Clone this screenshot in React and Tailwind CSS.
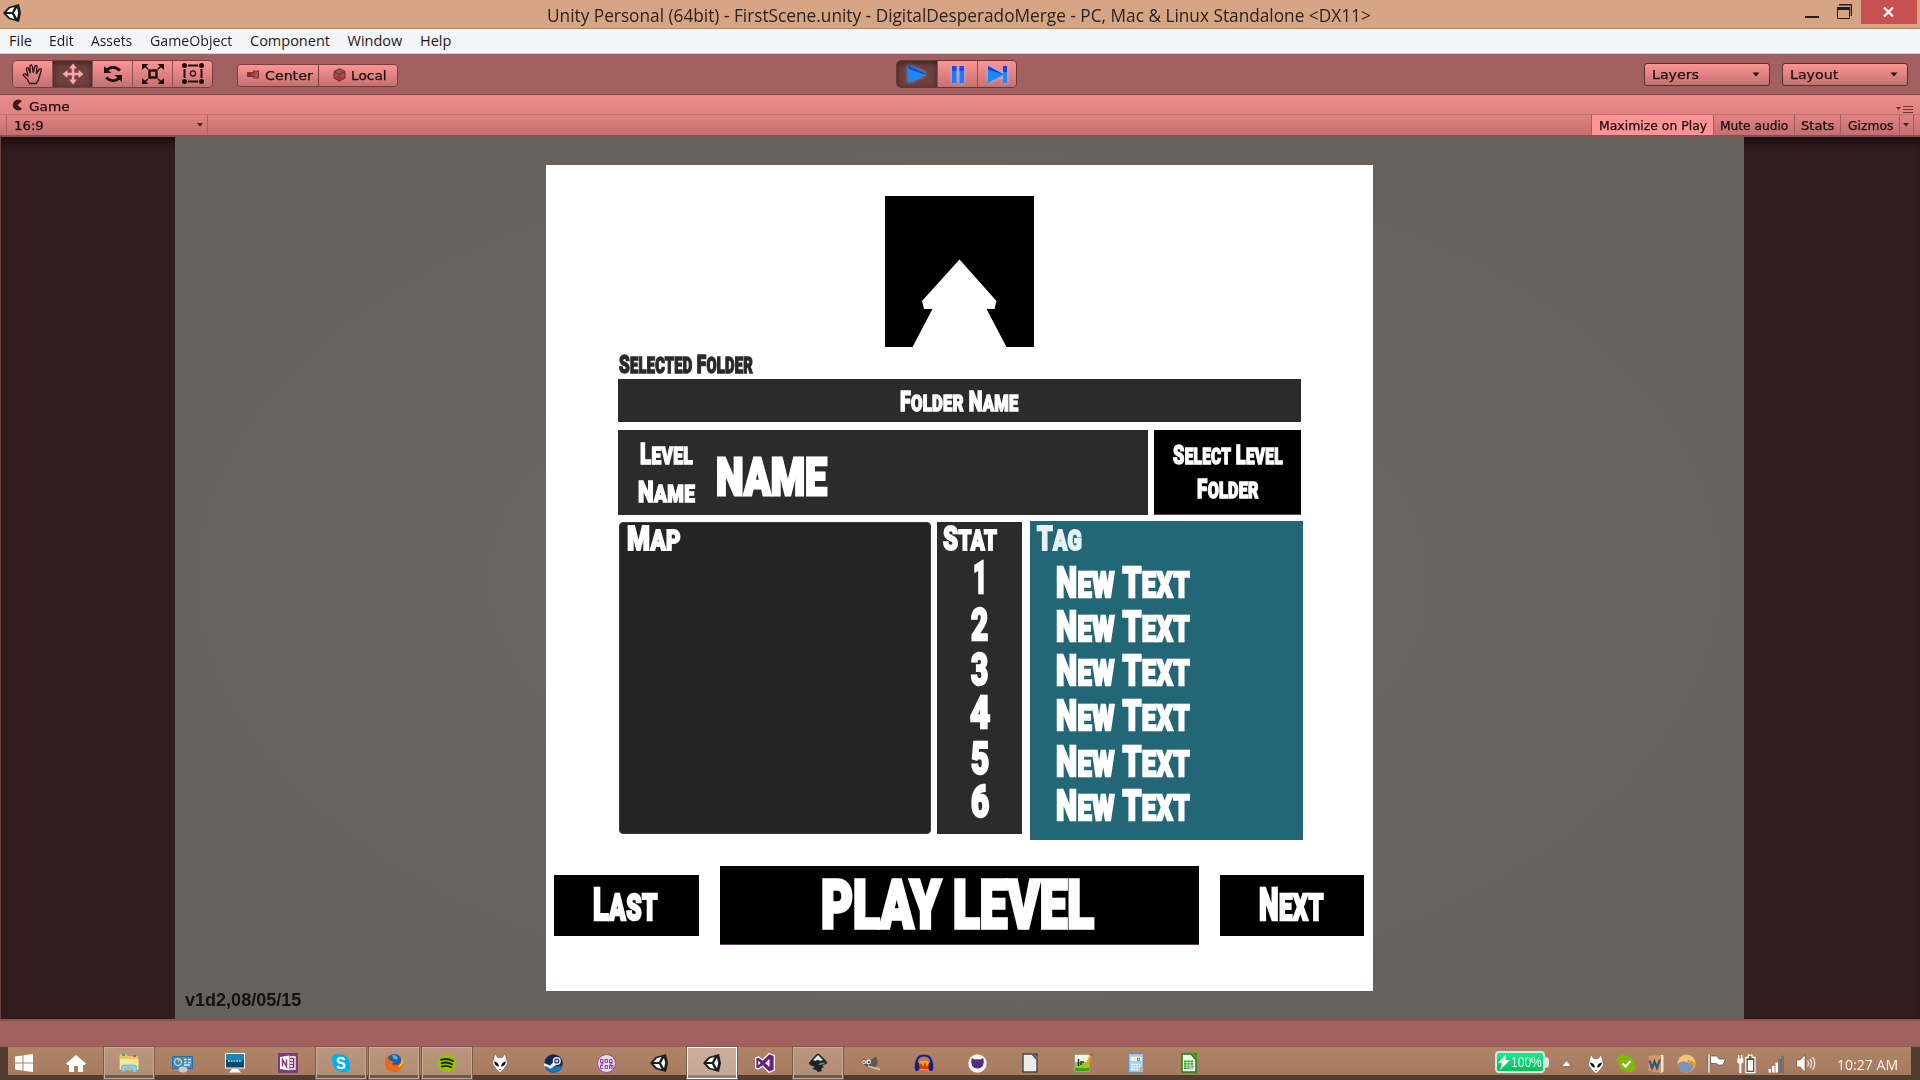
import { useLayoutEffect, useRef, useState } from "react";

/* Text squeezed or stretched horizontally to a given width. */
function Fit({ w, size, line, className = "", children }) {
  const ref = useRef(null);
  const [scale, setScale] = useState(1);
  useLayoutEffect(() => {
    if (ref.current.offsetWidth) setScale(w / ref.current.offsetWidth);
  }, [w, size]);
  return (
    <div className={"shrink-0 " + className} style={{ width: w, height: line, fontSize: size, lineHeight: line + "px" }}>
      <span ref={ref} className="inline-block origin-left whitespace-pre align-top" style={{ transform: `scaleX(${scale})` }}>
        {children}
      </span>
    </div>
  );
}

/* Poster lettering: heavy, condensed capitals with a larger first letter. */
function Deco({ w, cap, text, flat = false, className = "" }) {
  return (
    <Fit w={w} size={cap / 0.745} line={cap} className={"font-[Roboto,sans-serif] font-black [-webkit-text-stroke:0.055em_currentColor] " + className}>
      {flat
        ? text
        : text.split(" ").map((word, i) => (
            <span key={i}>
              {i > 0 && " "}
              <span className="inline-block text-[0.85em] leading-[0] tracking-[0.02em] uppercase first-letter:text-[1.176em]">{word}</span>
            </span>
          ))}
    </Fit>
  );
}

const Sys = (p) => <Fit {...p} className={"font-['Open_Sans','Noto_Sans',sans-serif] " + (p.className || "")} />;
const Uni = (p) => <Fit {...p} className={"font-['DejaVu_Sans',sans-serif] text-[#1c0e0e] [-webkit-text-stroke:0.25px_currentColor] " + (p.className || "")} />;

function Unity({ size = 20, className = "" }) {
  return (
    <svg width={size} height={size} viewBox="0 0 20 20" className={className}>
      <path d="M1 10 L6.5 4 L17 1 L19 10 L17 19 L6.5 16 Z" fill="#1d1d1d" />
      <path d="M4.5 9 L8 5.3 L12.5 4 L10 9Z M4.5 11 L8 14.7 L12.5 16 L10 11Z M12 10 L15 4.8 L16.2 10 L15 15.2Z" fill="#fff" />
    </svg>
  );
}

function Caret({ className = "" }) {
  return (
    <svg width="8" height="5" viewBox="0 0 8 5" className={className}>
      <path d="M0.5 0.5h7L4 4.5z" fill="#1c0e0e" />
    </svg>
  );
}

function Alien({ w = 16 }) {
  return (
    <svg width={w} height="20" viewBox="0 0 16 20">
      <path d="M3 .5 L5.5 4.5 H10.5 L13 .5 L14.5 6 L15.5 11 L12 16 L8 19.5 L4 16 L.5 11 L1.5 6Z" fill="#fff" stroke="#5b4b42" strokeWidth=".5" />
      <path d="M2 8.5 Q6.5 9 7 13.5 Q3 13.5 2 8.5Z M14 8.5 Q9.5 9 9 13.5 Q13 13.5 14 8.5Z M6.5 16h3l-1.5 1z" fill="#111" />
    </svg>
  );
}

function TitleBar() {
  return (
    <header className="flex h-[29px] shrink-0 border-b border-[#b98863] bg-[#d6a583]">
      <Unity size={20} className="mt-[3px] ml-[2px]" />
      <Sys w={824} size={17.5} line={31} className="ml-[525px] text-[#2b2320]">
        {"Unity Personal (64bit) - FirstScene.unity - DigitalDesperadoMerge - PC, Mac & Linux Standalone <DX11>"}
      </Sys>
      <div className="ml-auto flex">
        <div className="mt-4 mr-[18px] h-[2px] w-[14px] bg-[#222]" />
        <svg width="15" height="15" viewBox="0 0 15 15" className="mt-1 mr-[9px]">
          <path d="M2 .75H14.5V12" fill="none" stroke="#222" strokeWidth="1.5" />
          <path d="M.5 14.5V4H12.5V14.5Z" fill="none" stroke="#222" />
          <path d="M0 3h13v3H0z" fill="#222" />
        </svg>
        <div className="mr-[3px] flex h-6 w-14 items-center justify-center bg-[#c75050]">
          <svg width="11" height="10" viewBox="0 0 11 10" className="-ml-px">
            <path d="M1 .5 L10 9.5 M10 .5 L1 9.5" stroke="#fff" strokeWidth="2.2" />
          </svg>
        </div>
      </div>
    </header>
  );
}

const menus = [["File", 23, 17], ["Edit", 25, 17], ["Assets", 41, 18], ["GameObject", 82, 18], ["Component", 80, 17.5], ["Window", 55, 17.5], ["Help", 31, 0]];

function MenuBar() {
  return (
    <nav className="flex h-[25px] shrink-0 border-b border-[#d9cfd1] bg-[#f4f5f7] pl-[9px]">
      {menus.map(([t, w, gap]) => (
        <div key={t} className="shrink-0" style={{ marginRight: gap }}>
          <Sys w={w} size={14.5} line={24} className="text-[#1f1722]">{t}</Sys>
        </div>
      ))}
    </nav>
  );
}

const up = "bg-linear-to-b from-[#fd9494] to-[#c57171]";
const down = "bg-[#6f4141] shadow-[inset_0_2px_6px_#3c2020]";

function Tools() {
  const icons = [
    <svg key="h" width="22" height="22" viewBox="0 0 22 22" fill="none" stroke="#2a1414" strokeWidth="1.3" strokeLinejoin="round">
      <path d="M7 20 L5.5 16.5 L1.3 12.2 Q1.5 10.3 3.5 11 L6 13 L4.4 6 Q4.7 4 6.3 5 L8.2 10 L8 3 Q9 1 10.3 3 L11.2 9.5 L13 3 Q14.5 1.5 15 3.5 L14.3 10.5 L17.5 6 Q19.5 5 19.3 7 L17.3 14 Q16.5 17.5 14.5 20" />
      <path d="M7 20.5h8" />
    </svg>,
    <svg key="m" width="22" height="22" viewBox="0 0 22 22" fill="#ffa5a5">
      <path d="M11 .5 L15 5.5H12.3V9.7H16.5V7L21.5 11L16.5 15V12.3H12.3V16.5H15L11 21.5L7 16.5H9.7V12.3H5.5V15L.5 11L5.5 7V9.7H9.7V5.5H7Z" />
    </svg>,
    <svg key="r" width="20" height="18" viewBox="0 0 20 18" fill="none" stroke="#1c0e0e" strokeWidth="3">
      <path d="M3 5.500 Q10 -1 17 5.500 M17 12.500 Q10 19 3 12.500" />
      <path d="M1 1v7h7.500z M19 17v-7h-7.500z" fill="#1c0e0e" stroke="none" />
    </svg>,
    <svg key="s" width="22" height="20" viewBox="0 0 22 20" fill="none" stroke="#1c0e0e">
      <path d="M7.500 6.500h7v7h-7z" strokeWidth="2.4" />
      <path d="M6 5 L1.500 1 M16 5 L20.500 1 M6 15 L1.500 19 M16 15 L20.500 19" strokeWidth="1.600" />
      <path d="M0 0h6.500L0 6zM22 0v6L15.500 0zM0 20v-6L6.500 20zM22 20h-6.500L22 14z" fill="#1c0e0e" stroke="none" />
    </svg>,
    <svg key="t" width="22" height="21" viewBox="0 0 22 21" fill="none" stroke="#1c0e0e">
      <path d="M6 2.500h10M6 18.500h10M2.500 6v9M19.500 6v9" strokeWidth="2" />
      <circle cx="11" cy="10.500" r="2.600" strokeWidth="1.200" />
      <g fill="#1c0e0e" stroke="none">
        <circle cx="2.500" cy="2.500" r="2.500" /><circle cx="19.500" cy="2.500" r="2.500" />
        <circle cx="2.500" cy="18.500" r="2.500" /><circle cx="19.500" cy="18.500" r="2.500" />
      </g>
    </svg>,
  ];
  return (
    <div className="mt-[6px] ml-[12px] flex h-[28px] w-[201px] divide-x divide-[#8f5050] overflow-hidden rounded-[5px] border border-[#733f3f]">
      {icons.map((ic, i) => (
        <div key={i} className={"flex flex-1 items-center justify-center pb-px " + (i === 1 ? down : up)}>{ic}</div>
      ))}
    </div>
  );
}

function Toolbar() {
  return (
    <div className="flex h-[41px] shrink-0 border-b border-[#7d4848] bg-[#a26060]">
      <Tools />
      <div className="mt-[10px] ml-[24px] flex h-[23px] w-[161px] divide-x divide-[#733f3f] overflow-hidden rounded-[4px] border border-[#733f3f]">
        <div className={"flex w-[81px] items-center pl-[9px] " + up}>
          <svg width="12" height="9" viewBox="0 0 12 9" className="mr-[6px] -mt-[2px]">
            <path d="M0 2h6v5H0z" fill="#7b3636" /><path d="M6.500 1h5v7h-5z" fill="#a25858" stroke="#693434" /><path d="M4 3h4v3H4z" fill="#c92c38" />
          </svg>
          <Uni w={48} size={13} line={21}>Center</Uni>
        </div>
        <div className={"flex flex-1 items-center pl-[14px] " + up}>
          <svg width="13" height="14" viewBox="0 0 13 14" className="mr-[5px] -mt-[2px]">
            <path d="M6.500 .7 L12 3.500V10L6.500 13.300L1 10V3.500Z" fill="#955" stroke="#5e3030" />
            <path d="M1 3.500L6.500 6.500L12 3.500M6.500 6.500V13" stroke="#5e3030" fill="none" />
            <path d="M2 9.500l4.500-2 4.500 2-4.500 3.500z" fill="#c62b38" />
          </svg>
          <Uni w={36} size={13} line={21}>Local</Uni>
        </div>
      </div>
      <div className="mt-[6px] ml-[498px] flex h-[28px] w-[121px] divide-x divide-[#8f5050] overflow-hidden rounded-[5px] border border-[#653838]">
        <div className={"flex w-[41px] items-center justify-center " + down}>
          <svg width="19" height="18" viewBox="0 0 19 18" className="drop-shadow-[0_0_2px_#69b8ff]"><path d="M.5 .5L18.500 9L.5 17.500z" fill="#148cff" /><path d="M.5 .5L18.500 9L15 9L.5 4z" fill="#1048e8" /></svg>
        </div>
        <div className={"flex w-[40px] items-center justify-center " + up}>
          <svg width="12" height="17" viewBox="0 0 12 17" className="drop-shadow-[0_0_2px_#a8b8ff]"><path d="M0 0h4.500v17H0zM7.500 0h4.500v17H7.500z" fill="#167cf8" /><path d="M0 0h4.500v5H0zM7.500 0h4.500v5H7.500z" fill="#0d4df0" /></svg>
        </div>
        <div className={"flex flex-1 items-center justify-center " + up}>
          <svg width="19" height="17" viewBox="0 0 19 17" className="drop-shadow-[0_0_2px_#a8b8ff]"><path d="M0 0L15 8V0h4v17h-4V9L0 17z" fill="#168af8" /><path d="M0 0L15 8V0h4v6h-4v2.500L0 3.500z" fill="#0d45d8" /></svg>
        </div>
      </div>
      <div className="mt-[9px] mr-[12px] ml-auto flex gap-[12px]">
        {[["Layers", 47], ["Layout", 48]].map(([t, w]) => (
          <div key={t} className={"flex h-[23px] w-[126px] items-center justify-between rounded-[3px] border border-[#593030] pr-[9px] pl-[7px] " + up}>
            <Uni w={w} size={13} line={21}>{t}</Uni>
            <Caret />
          </div>
        ))}
      </div>
    </div>
  );
}

const toggles = [["Maximize on Play", 108, 121, true], ["Mute audio", 68, 80, false], ["Stats", 33, 45, false], ["Gizmos", 45, 58, false]];

function GameTab() {
  return (
    <div className="shrink-0">
      <div className="flex h-[20px] items-start border-b border-[#c07272] bg-linear-to-b from-[#ec8c8c] to-[#e08282] pl-[12px]">
        <svg width="11" height="12" viewBox="0 0 11 12" className="mt-[4px]">
          <path d="M10 2 A5.500 5.500 0 1 0 10 10 L5.500 6Z" fill="#3a1b1b" />
        </svg>
        <Uni w={41} size={13} line={23} className="ml-[6px]">Game</Uni>
        <div className="mt-[10px] mr-[7px] ml-auto flex items-start">
          <svg width="17" height="9" viewBox="0 0 17 9"><path d="M0 2h5L2.500 5z" fill="#5d3030" /><path d="M7 1.500h10M7 4.500h10M7 7.500h10" stroke="#6a3838" /></svg>
        </div>
      </div>
      <div className="flex h-[22px] border-b-2 border-[#8a4e4e] bg-linear-to-b from-[#e08383] to-[#c66f6f]">
        <div className="ml-[6px] flex w-[202px] items-start justify-between border-x border-[#b06464] pr-[4px] pl-[7px]">
          <Uni w={30} size={11.500} line={22}>16:9</Uni>
          <svg width="6" height="4" viewBox="0 0 6 4" className="mt-[8px]"><path d="M0 0h6L3 3.500z" fill="#4a2020" /></svg>
        </div>
        <div className="mr-[6px] ml-auto flex border-x border-[#a55c5c]">
          {toggles.map(([t, w, box, on]) => (
            <div key={t} className={"flex justify-center border-r border-[#a55c5c] " + (on ? "bg-[#ff9494]" : "")} style={{ width: box + 1 }}>
              <Uni w={w} size={11.500} line={22}>{t}</Uni>
            </div>
          ))}
          <div className="flex w-[13px] justify-center pt-[8px] pr-[2px]">
            <svg width="6" height="4" viewBox="0 0 6 4"><path d="M0 0h6L3 3.500z" fill="#4a2020" /></svg>
          </div>
        </div>
      </div>
    </div>
  );
}

const statRows = [["1", 14, 562], ["2", 17, 608.5], ["3", 17, 653.5], ["4", 20, 696.5], ["5", 18, 743], ["6", 18, 786]];
const tagTops = [566, 610, 654.5, 699.5, 745.5, 789.5];

function LevelPanel() {
  return (
    <div className="flex h-[826px] w-[827px] flex-col bg-white text-white">
      <svg width="149" height="151" viewBox="0 0 149 151" className="mt-[31px] ml-[339px] shrink-0">
        <path d="M0 0H149V151H121.500L101.500 113H109.500L111.500 105L74.500 63.500L37 105L39 113H47.500L27.500 151H0Z" fill="#000" />
      </svg>
      <Deco w={134} cap={19} text="Selected Folder" className="mt-[8px] ml-[73px] text-[#2b2b2b]" />
      <div className="mt-[5px] ml-[72px] flex h-[43px] w-[683px] shrink-0 items-center justify-center bg-[#2b2b2b] pt-[2px]">
        <Deco w={119} cap={20} text="Folder Name" />
      </div>
      <div className="mt-[8px] ml-[72px] flex h-[85px] w-[683px] shrink-0 gap-[6px]">
        <div className="flex w-[530px] bg-[#2b2b2b] pl-[20px]">
          <div className="flex w-[57px] flex-col items-center gap-[16px] pt-[14px]">
            <Deco w={53} cap={21.5} text="Level" />
            <Deco w={57} cap={21.5} text="Name" />
          </div>
          <Deco w={111} cap={39} text="NAME" flat className="mt-[28px] ml-[21px]" />
        </div>
        <div className="flex flex-1 flex-col items-center gap-[14px] border-b border-[#5d3c66] bg-black pt-[16px]">
          <Deco w={110} cap={19.5} text="Select Level" />
          <Deco w={62} cap={19.5} text="Folder" />
        </div>
      </div>
      <div className="mt-[6px] ml-[73px] flex h-[319px] shrink-0">
        <div className="mt-px h-[312px] w-[312px] rounded-[4px] border border-[#3a3a3a] bg-[#242424] pt-[3px] pl-[7px]">
          <Deco w={54} cap={25} text="Map" />
        </div>
        <div className="mt-px ml-[6px] flex h-[312px] w-[85px] flex-col bg-[#2b2b2b] pt-[4px]">
          <Deco w={54} cap={25} text="Stat" className="ml-[6px]" />
          {statRows.map(([d, w, y], i) => (
            <div key={d} className="flex shrink-0 justify-center" style={{ marginTop: i ? y - statRows[i - 1][2] - 32.5 : 12 }}>
              <Deco w={w} cap={32.5} text={d} flat />
            </div>
          ))}
        </div>
        <div className="ml-[8px] w-[273px] bg-[#236777] pt-[5px]">
          <Deco w={45} cap={25} text="Tag" className="ml-[7px] text-[#e6f2f3]" />
          {tagTops.map((y, i) => (
            <div key={y} className="pl-[26px]" style={{ marginTop: i ? y - tagTops[i - 1] - 31 : 15.5 }}>
              <Deco w={134} cap={31} text="New Text" />
            </div>
          ))}
        </div>
      </div>
      <div className="mt-[26px] ml-[8px] flex shrink-0 items-center gap-[21px]">
        <div className="flex h-[61px] w-[145px] items-center justify-center bg-black pr-[2px]"><Deco w={65} cap={33} text="Last" /></div>
        <div className="flex h-[79px] w-[479px] items-center justify-center border-b border-[#5d3c66] bg-black pt-[2px]"><Deco w={273} cap={49.5} text="PLAY LEVEL" flat className="-ml-[4px]" /></div>
        <div className="flex h-[61px] w-[144px] items-center justify-center bg-black pr-px"><Deco w={65} cap={33} text="Next" /></div>
      </div>
    </div>
  );
}

function GameView() {
  return (
    <main className="flex h-[882px] shrink-0 border-l border-[#6d3f3f] bg-[#301d1d] shadow-[inset_0_10px_10px_-4px_#1d1010]">
      <div className="ml-[174px] flex w-[1569px] bg-[radial-gradient(ellipse_at_center,#6c645e_40%,#68605a_75%)]">
        <div className="flex w-[371px] items-end pb-[8px] pl-[10px]">
          <Fit w={116} size={18.5} line={22} className="font-['Liberation_Sans',sans-serif] font-bold text-[#151210]">v1d2,08/05/15</Fit>
        </div>
        <div className="pt-[28px]"><LevelPanel /></div>
      </div>
    </main>
  );
}

const taskIcons = [
  [<svg key="i" width="18" height="18" viewBox="0 0 18 18" className="ml-[2px]"><path d="M0 2.500L7.500 1.400V8.500H0zM8.500 1.200L18 0V8.500H8.500zM0 9.500h7.500v7L0 15.500zM8.500 9.500H18V18L8.500 16.700z" fill="#fff" /></svg>],
  [<svg key="i" width="20" height="17" viewBox="0 0 20 17"><path d="M10 0L20 8.500L18.500 10H17V17H12V11H8V17H3V10H1.500L0 8.500z" fill="#fff" /></svg>],
  [<svg key="i" width="20" height="20" viewBox="0 0 20 20"><path d="M.5 3Q.5 1 2 1H7L9 3H18Q19 3 19 4V17H.5z" fill="#e6c765" /><path d="M3 .8h3v2H3z" fill="#3ba552" /><path d="M14 2h3v2h-3z" fill="#d05c38" /><path d="M1 6H19.500V16H1z" fill="#f8e69c" /><path d="M2.500 19V14Q2.500 12 5 12H15Q17.500 12 17.500 14V19H13.500V15.500H6.500V19z" fill="#8dcdec" stroke="#5ba8d2" strokeWidth=".6" /></svg>, "open"],
  [<svg key="i" width="21" height="19" viewBox="0 0 21 19"><path d="M.5 2.500h20v12H.5z" fill="#3c8ac8" stroke="#2a6ca5" /><circle cx="6" cy="8" r="3.500" fill="none" stroke="#d6ecfb" /><path d="M6 8V4A4 4 0 0 1 9.500 6z" fill="#ffb52c" /><path d="M12 5.500h2.500M16 5.500h3M12 8.500h2.500M16 8.500h3M12 11h6" stroke="#d6ecfb" strokeWidth="1.500" /><ellipse cx="11" cy="15.500" rx="4.500" ry="3" fill="#c8ccd1" /></svg>],
  [<svg key="i" width="20" height="20" viewBox="0 0 20 20"><path d="M0 0h20v15.500H0z" fill="#f5f8fb" /><path d="M1 1h18v13.500H1z" fill="#06476f" /><path d="M1 1h18v6H1z" fill="#1488b9" /><path d="M3 8h14" stroke="#b3dcec" strokeWidth="1.500" strokeDasharray="2 .7" /><path d="M7 16h6l3 3.500H4z" fill="#fff" /></svg>],
  [<div key="i" className="flex h-5 w-5 items-center justify-center bg-[#80397b]"><svg width="16" height="16" viewBox="0 0 16 16"><path d="M10 2h5v12h-5" fill="none" stroke="#fff" strokeWidth="1.300" /><path d="M10 5h3M10 8h3M10 11h3" stroke="#fff" strokeWidth="1.300" /><path d="M0 2L9.500 .5v15L0 14z" fill="#fff" /><path d="M2.500 11.500V4.500L6.500 11.500V4.500" fill="none" stroke="#80397b" strokeWidth="1.500" /></svg></div>],
  [<svg key="i" width="20" height="20" viewBox="0 0 20 20"><circle cx="10" cy="10" r="8.500" fill="#00aff0" /><circle cx="6" cy="6" r="5.300" fill="#00aff0" /><circle cx="14" cy="14" r="5.300" fill="#00aff0" /><path d="M13.300 7Q12.500 4.800 10 4.800Q6.800 4.800 6.800 7.300Q6.800 9.300 10 9.900Q13.500 10.500 13.500 12.700Q13.500 15.200 10 15.200Q7 15.200 6.500 12.800" fill="none" stroke="#fff" strokeWidth="2.200" /></svg>, "open"],
  [<svg key="i" width="20" height="20" viewBox="0 0 20 20"><circle cx="10" cy="10" r="9" fill="#e55b16" /><path d="M4 4Q8 0 14 2Q18 5 17 9Q15 12 11 12Q6 11 5 8z" fill="#1d5da8" /><path d="M8 2Q13 2 14 5Q12 8 9 5z" fill="#52b0e0" /><path d="M1.500 4Q0 11 3 15Q8 20.500 15 17.500Q19.500 14 18.500 7Q17 12 12 13.500Q8 13 8 10.500L10.500 9.500L6.500 7.500Q4 7 3.500 4.500z" fill="#ec6a1a" /><path d="M17.500 4Q18.500 10 14 14Q18 14 19 9Q19 6 17.500 4z" fill="#ffd23e" /></svg>, "open"],
  [<svg key="i" width="20" height="20" viewBox="0 0 20 20"><circle cx="10" cy="10" r="9.300" fill="#97c200" /><path d="M4 6.800Q10 4.800 16 8M4.500 10.300Q10 8.300 15 11.200M5 13.500Q10 12 14 14.300" fill="none" stroke="#1c2400" strokeWidth="1.900" strokeLinecap="round" /></svg>, "open"],
  [<Alien key="i" />],
  [<svg key="i" width="19" height="19" viewBox="0 0 19 19"><circle cx="9.500" cy="9.500" r="9.200" fill="#14284e" /><path d="M1 13Q5 19 10 18.700Q16 18 18.500 12z" fill="#1377b1" /><path d="M0 9L6 11.500L10 7.500L14 10L9 13Q6 16 4.500 13.500L0 12z" fill="#e8e8ee" /><circle cx="12.800" cy="7" r="3.300" fill="#14284e" stroke="#e8e8ee" strokeWidth="1.500" /><circle cx="12.800" cy="7" r="1.500" fill="#cdd4dd" /></svg>],
  [<svg key="i" width="19" height="19" viewBox="0 0 19 19"><circle cx="9.500" cy="9.500" r="9" fill="#e6dde8" stroke="#954fa5" /><path d="M6 8.500H3.500V5.500H6V10H3.500M8 5.500h2.500v3H8zM15 8.500H12.500V5.500H15V10H12.500M6 11.500H3.500v3H6M8 11.500h2.500v3H8zM12.500 15v-3.500h3.500V15M14.200 11.500V15" fill="none" stroke="#8c39a5" strokeWidth="1" /></svg>],
  [<Unity key="i" size={20} />],
  [<Unity key="i" size={20} />, "active"],
  [<svg key="i" width="20" height="20" viewBox="0 0 20 20"><path d="M14 .7L19.300 2.500V17L14 19.300L7.500 13L3.500 16L.7 15V5L3.500 4L7.500 7z" fill="#68217a" stroke="#fff" strokeWidth="1.300" /><path d="M14.500 6V14L10 10zM3.300 7.500V12.500L5.500 10z" fill="#fff" /></svg>],
  [<svg key="i" width="20" height="20" viewBox="0 0 20 20"><path d="M10 .5Q12 1 19 9Q20 11 16 11.500L14 13L16 14L13 16L14 18L10 19L8 17L4 16L7 14L2 12Q0 10 2 8.500Q8 1 10 .5z" fill="#1e2228" /><path d="M10 2L15 7L12 8L10 6.500L7.500 8L5 7z" fill="#dfe7ef" /><path d="M12 10L18 9.500Q15 12 10 12z" fill="#6f87a5" /></svg>, "open"],
  [<svg key="i" width="20" height="16" viewBox="0 0 20 16"><path d="M.5 5Q3 3 6 5Q11 6 15 1L16.500 6Q17 10 14 12Q8 14 4 10L1 8z" fill="#5e564b" /><circle cx="3" cy="7" r="1.900" fill="#f3f3f3" /><circle cx="7.500" cy="7" r="2.400" fill="#f3f3f3" /><circle cx="3" cy="7" r=".8" /><circle cx="7.800" cy="7.200" r="1" /><path d="M7 11L19 14.500" stroke="#d2c7b4" strokeWidth="1.500" /></svg>],
  [<svg key="i" width="20" height="18" viewBox="0 0 20 18"><path d="M5 7h10v9H5z" fill="#f5a416" /><path d="M5 12L7 9L9 13L11 8L13 13L15 10V15H5z" fill="#e52c14" /><path d="M2.500 11Q2 1.500 10 1.500Q18 1.500 17.500 11" fill="none" stroke="#171d8b" strokeWidth="2.200" /><rect x=".8" y="8" width="4.500" height="9" rx="2" fill="#171d8b" /><rect x="14.700" y="8" width="4.500" height="9" rx="2" fill="#171d8b" /></svg>],
  [<svg key="i" width="19" height="19" viewBox="0 0 19 19"><circle cx="9.500" cy="9.500" r="9.200" fill="#f7f5fa" /><path d="M3.800 4L6.500 5.500Q9.500 5 12.500 5.500L15.200 4Q16.500 8 15 11.500Q13 14.500 9.500 14.500Q6 14.500 4 11.500Q2.500 8 3.800 4z" fill="#4f2d7f" /></svg>],
  [<svg key="i" width="16" height="20" viewBox="0 0 16 20"><path d="M1 1H10L15 6.500V19H1z" fill="#ececec" stroke="#444" strokeWidth="1.400" /><path d="M11 0h5v5z" fill="#555" /></svg>],
  [<svg key="i" width="19" height="20" viewBox="0 0 19 20"><path d="M.5 1.500h15V19H.5z" fill="#f3f9ea" stroke="#8b9b75" strokeWidth=".8" /><path d="M1 9h14v9H1z" fill="#86cf1e" /><path d="M1 15h14v3.500H1z" fill="#37a613" /><path d="M4.500 6v7M7 8v4M9 8v2" stroke="#222" strokeWidth="1.400" /><path d="M17.500 1L11 15" stroke="#e2a72b" strokeWidth="2.400" /><path d="M17 0l2 1-1 2-2-1z" fill="#914b4b" /></svg>],
  [<svg key="i" width="16" height="20" viewBox="0 0 16 20"><path d="M.7 .7h14.600v18.600H.7z" fill="#a9cee8" stroke="#5790b7" /><path d="M2.500 2.500h11V8h-11z" fill="#e6f2fb" /><path d="M2.500 2.500h11v1h-11z" fill="#f0a648" /><path d="M9.500 5h2v2.500h-2z" fill="none" stroke="#4674a0" strokeWidth=".8" /><path d="M3 11.500h10M3 14h10M3 16.500h8" stroke="#f4faff" strokeWidth="1.500" strokeDasharray="1.800 .8" /><path d="M12 14h1.500v4H12z" fill="#ef9a31" /></svg>],
  [<svg key="i" width="16" height="20" viewBox="0 0 16 20"><path d="M1 1H10L15 6.500V19H1z" fill="#f1f8ee" stroke="#148012" strokeWidth="1.500" /><path d="M11 0h5v5z" fill="#18a303" /><path d="M3 7.500h9V16H3z" fill="#2c9c22" /><path d="M3 9.700h9M3 12h9M3 14h9M6 7.500V16M9 7.500V16" stroke="#f1f8ee" strokeWidth=".7" /><path d="M8.500 12h4v4.500h-4z" fill="#b9c0d8" /><path d="M10.500 12.500h2v2h-2z" fill="#e87432" /></svg>],
];

const slotStyle = {
  open: "border border-[#c5ab9b] bg-white/15 outline outline-[#7b5c49]",
  active: "border border-white bg-white/35 outline outline-[#7b5c49]",
};

const trayIcons = [
  <svg key="0" width="11" height="7" viewBox="0 0 11 7"><path d="M5.500 .5L10.500 6.500H.5z" fill="#fff" stroke="#5a463a" strokeWidth=".6" /></svg>,
  <Alien key="1" />,
  <svg key="2" width="19" height="19" viewBox="0 0 19 19"><circle cx="9.500" cy="9.500" r="7.800" fill="#7fba00" /><circle cx="5.500" cy="5.500" r="5" fill="#7fba00" /><circle cx="13.500" cy="13.500" r="5" fill="#7fba00" /><path d="M5.500 9.500l3 3 5-5.500" fill="none" stroke="#fff" strokeWidth="2.200" /></svg>,
  <svg key="3" width="16" height="18" viewBox="0 0 16 18"><path d="M.5 1L13 0V18L.5 16z" fill="#dc9660" /><path d="M13 0h2.500v16.500L13 18z" fill="#efe6df" /><path d="M1.500 5.500L4 13L6.500 6.500L9 13L12 4.500" fill="none" stroke="#225b91" strokeWidth="2.200" /></svg>,
  <svg key="4" width="19" height="19" viewBox="0 0 19 19"><circle cx="9.500" cy="9.500" r="9" fill="#f5c579" /><path d="M10 6Q15 6 18 9Q18 13 15 14z" fill="#e8912d" /><path d="M.5 10Q5 6 9 8Q15 9 16.500 14Q13 19 8 18.500Q1 17 .5 10z" fill="#7c93b9" /></svg>,
  <svg key="5" width="19" height="19" viewBox="0 0 19 19"><path d="M1 0h2v19H1z" fill="#fff" stroke="#5a463a" strokeWidth=".5" /><path d="M3.500 2H10L12 5H18.500L16 11H11L9.500 9.500H3.500z" fill="#fff" stroke="#5a463a" strokeWidth=".7" /></svg>,
  <svg key="6" width="19" height="20" viewBox="0 0 19 20"><path d="M1.800 1v4M4.800 1v4" stroke="#fff" strokeWidth="1.200" /><path d="M.3 4.500h6v4L4.300 10V19H2.300V10L.3 8.500z" fill="#fff" /><path d="M8.800 3.500h2.700V1.200h3.500v2.300h3V18.700H8.800z" fill="#64503f" stroke="#fff" strokeWidth="1.300" /><path d="M10.800 6h5.200v10.700h-5.200z" fill="#fff" /></svg>,
  <svg key="7" width="16" height="18" viewBox="0 0 16 18"><path d="M.5 14h2.500v3.500H.5zM4 11h2.500v6.500H4zM7.500 7.500H10v10H7.500z" fill="#fff" /><path d="M10.800 4h2v13.500h-2zM13.500 1h2v16.500h-2z" fill="#777" stroke="#555" strokeWidth=".4" /></svg>,
  <svg key="8" width="20" height="19" viewBox="0 0 20 19"><path d="M.5 6H4L9 .8V18.200L4 13H.5z" fill="#fff" stroke="#5a463a" strokeWidth=".6" /><path d="M11.500 6.500Q13.500 9.500 11.500 12.500M14 5Q17 9.500 14 14M16.500 3Q21 9.500 16.500 16" fill="none" stroke="#f5ece6" strokeWidth="1.200" /></svg>,
];

function Taskbar() {
  return (
    <footer className="flex h-[33px] shrink-0 bg-[linear-gradient(90deg,#513d30_8px,transparent_8px,transparent_1911px,#513d30_1911px),linear-gradient(180deg,#af8366_0px,#a67b5f_28px,#513d30_28px)]">
      <div className="-ml-[2px] flex gap-[3px]">
        {taskIcons.map(([icon, state], i) => (
          <div key={i} className={"flex h-[32px] w-[50px] items-center justify-center " + (slotStyle[state] || "")}>{icon}</div>
        ))}
      </div>
      <div className="mr-[22px] ml-auto flex">
        <div className="mt-[4px] flex h-[22px] items-center">
          <div className="flex h-[22px] w-[50px] items-center rounded-[4px] border-2 border-[#d8e6dc] bg-linear-to-b from-[#0ef08a] to-[#04bd5d] pl-px">
            <svg width="12" height="16" viewBox="0 0 12 16"><path d="M8 0L0 9h4L2 16L12 6H7.500z" fill="#fff" /></svg>
            <Fit w={31} size={14} line={18} className="ml-px font-['Liberation_Sans',sans-serif] text-white">100%</Fit>
          </div>
          <div className="h-[11px] w-[4px] rounded-r-sm bg-[#e4e2e0]" />
        </div>
        <div className="ml-[2px] flex">
          {trayIcons.map((ic, i) => (
            <div key={i} className="flex h-[33px] w-[30px] items-center justify-center">{ic}</div>
          ))}
        </div>
        <Sys w={61} size={15} line={35} className="ml-[16px] text-[#fff7f0]">10:27 AM</Sys>
      </div>
    </footer>
  );
}

export default function App() {
  return (
    <div className="flex h-[1080px] w-[1920px] flex-col overflow-hidden bg-[#a26060]">
      <TitleBar />
      <MenuBar />
      <Toolbar />
      <GameTab />
      <GameView />
      <div className="h-[28px] shrink-0 border-t-2 border-b border-t-[#8d5252] border-b-[#8d6150] bg-[#a26060]" />
      <Taskbar />
    </div>
  );
}
